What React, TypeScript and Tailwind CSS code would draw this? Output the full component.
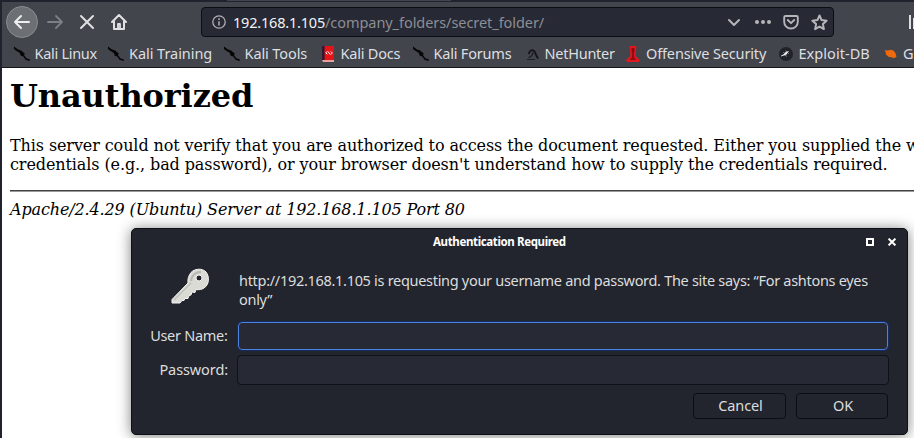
import React from "react";

const ui = "font-['Noto_Sans','Open_Sans',sans-serif]";

function Dragon() {
  return (
    <svg width="16" height="16" viewBox="0 0 16 16" fill="#050505">
      <path d="M0 .5 4 3.6 7.2 4.5 9.4 6.6 10.8 7.6 10 9l2.2 3.3L16 13.6l-.5 1.4-4-1.2-2.2-3.2-2.5-.9L5.8 7 2.3 4.7 0 3Z" />
    </svg>
  );
}

function DocsIcon() {
  return (
    <svg width="12" height="16" viewBox="0 0 12 16">
      <path d="M0 0h12v14H0z" fill="#e41318" />
      <path d="M0 0h2.6v14H0z" fill="#35182f" />
      <path d="M0 14h12v2H1z" fill="#e8a0a0" />
      <path d="M5.400 5.300 3.900 6.800l1.500 1.500M8.800 5.500l1.500 1.500-1.500 1.500M6 5.500l2.200 3" stroke="#fff" fill="none" />
    </svg>
  );
}

function NetHunterIcon() {
  return (
    <svg width="12" height="14" viewBox="0 0 12 14" fill="none" stroke="#14161a">
      <path d="M0 12.500h8" strokeWidth=".8" />
      <path d="M1.800 7C2.500 3.500 5 2.200 7 4c1.800 2 2 5 4.200 7.500" strokeWidth="1.9" />
      <path d="M1.500 10.500c3-.5 4-2.500 4.500-5" strokeWidth="1.2" />
    </svg>
  );
}

function OffensiveIcon() {
  return (
    <svg width="14" height="16" viewBox="0 0 14 16">
      <path d="M3.5 0h7l-1 10 4.5 4-1 2H1l-1-2 4.5-4Z" fill="#e0181d" />
      <path d="M5.5 2h3v4l-.7 1 .2 4 2 3H4l2-3 .2-4-.7-1Z" fill="#8f0a12" />
    </svg>
  );
}

function ExploitIcon() {
  return (
    <svg width="14" height="14" viewBox="0 0 14 14">
      <circle cx="7" cy="7" r="7" fill="#202329" />
      <path d="m2 8.800 3-1.800 2-2.200 3-.8-1.500 2-1.500 2-3 .8-2 .8Z" fill="#f4f4f4" />
      <path d="M4.500 5 7.500 9.500M6.500 3.800l3.500 3" stroke="#ccc" strokeWidth=".6" />
    </svg>
  );
}

function FlameIcon() {
  return (
    <svg width="13" height="10" viewBox="0 0 13 10">
      <path d="M2 3.500 .5 1.200l3.500.3 2.500-.8 3 .8 2 2.800 1 3.500-2 1.200L8 8.600 4.500 7.800 1.500 5Z" fill="#f06a0c" />
    </svg>
  );
}

const bookmarks = [
  { label: "Kali Linux", icon: <Dragon />, w: "w-[94px]", i: "w-[20.5px]", t: "tracking-[-0.29px]" },
  { label: "Kali Training", icon: <Dragon />, w: "w-[116px]", i: "w-[21px]", t: "tracking-[-0.05px]" },
  { label: "Kali Tools", icon: <Dragon />, w: "w-[98px]", i: "w-[20.5px]", t: "tracking-[-0.1px]" },
  { label: "Kali Docs", icon: <DocsIcon />, w: "w-[91px]", i: "w-[18.5px]", t: "tracking-[-0.2px]" },
  { label: "Kali Forums", icon: <Dragon />, w: "w-[114px]", i: "w-[20.5px]", t: "tracking-[-0.2px]" },
  { label: "NetHunter", icon: <NetHunterIcon />, w: "w-[99px]", i: "w-[17.5px]", t: "tracking-[-0.25px]" },
  { label: "Offensive Security", icon: <OffensiveIcon />, w: "w-[153px]", i: "w-[20px]", t: "tracking-[-0.15px]" },
  { label: "Exploit-DB", icon: <ExploitIcon />, w: "w-[105px]", i: "w-[19.5px]", t: "tracking-[0.05px]" },
  { label: "GHDB", icon: <FlameIcon />, w: "w-[80px]", i: "w-[19px]", t: "tracking-[-0.1px]" },
];

function Toolbar() {
  return (
    <div className="flex h-[36px] items-center pl-[4px]">
      <div className="grid size-[32px] shrink-0 place-items-center rounded-full border border-[#8a8c8f] bg-[#6c6f73]">
        <svg width="18" height="18" viewBox="0 0 18 18" fill="none" stroke="#eeeef0" strokeWidth="2" strokeLinecap="round" strokeLinejoin="round">
          <path d="M2 9h14M8 3 2 9l6 6" />
        </svg>
      </div>
      <svg className="ml-[8px] shrink-0" width="18" height="18" viewBox="0 0 18 18" fill="none" stroke="#7c7f84" strokeWidth="1.8" strokeLinecap="round" strokeLinejoin="round">
        <path d="M2 9h13.5M10 3l6 6-6 6" />
      </svg>
      <svg className="ml-[14px] shrink-0" width="18" height="18" viewBox="0 0 18 18" fill="none" stroke="#dfe0e2" strokeWidth="2" strokeLinecap="round">
        <path d="m3 3 12 12M15 3 3 15" />
      </svg>
      <svg className="ml-[14px] shrink-0" width="18" height="18" viewBox="0 0 18 18" fill="none" stroke="#dfe0e2" strokeWidth="2" strokeLinecap="round" strokeLinejoin="round">
        <path d="m2 9 7-7 7 7M4 8.5V16h10V8.5" />
        <path d="M8 15.5v-4.500h2v4.500" strokeWidth="1.800" />
      </svg>
      <div className="ml-[73px] flex h-[30px] w-[633px] shrink-0 items-center rounded-[4px] border border-[#0c0d12] bg-[#272934] pl-[10px]">
        <svg width="14" height="14" viewBox="0 0 14 14" fill="none" stroke="#b0b1b5" strokeWidth="1.3">
          <circle cx="7" cy="7" r="6.2" />
          <path d="M7 6.2v4.3M7 3.3v1.6" strokeWidth="1.5" />
        </svg>
        <div className={`${ui} ml-[7px] w-[494px] whitespace-nowrap text-[14.5px] leading-[20px] tracking-[-0.06px] text-[#8d8e94]`}>
          <span className="tracking-[-0.2px] text-[#f3f3f4]">192.168.1.105</span>/company_folders/secret_folder/
        </div>
        <svg width="14" height="14" viewBox="0 0 14 14" fill="none" stroke="#b5b6b9" strokeWidth="2" strokeLinecap="round" strokeLinejoin="round">
          <path d="m2 5 5 5 5-5" />
        </svg>
        <svg className="ml-[14px]" width="16" height="6" viewBox="0 0 16 6" fill="#b5b6b9">
          <circle cx="2" cy="3" r="2" /><circle cx="8" cy="3" r="2" /><circle cx="14" cy="3" r="2" />
        </svg>
        <svg className="ml-[12px]" width="16" height="16" viewBox="0 0 16 16" fill="none" stroke="#b5b6b9" strokeWidth="1.9" strokeLinecap="round" strokeLinejoin="round">
          <path d="M2.5 2h11q1.3 0 1.3 1.3V8a6.8 6.5 0 0 1-13.6 0V3.3Q1.200 2 2.500 2ZM4.800 6 8 9.200 11.200 6" />
        </svg>
        <svg className="ml-[12px]" width="17" height="17" viewBox="0 0 17 17" fill="none" stroke="#b5b6b9" strokeWidth="2" strokeLinejoin="round">
          <path d="m8.500 1.500 2.100 4.600 5 .6-3.700 3.400 1 5-4.400-2.500-4.400 2.500 1-5-3.700-3.400 5-.6Z" />
        </svg>
      </div>
      <svg className="ml-[75px] shrink-0" width="16" height="16" viewBox="0 0 16 16" fill="#dfe0e2">
        <path d="M0 1h2v14H0zM4 4h2v11H4zM8 1h2v14H8z" />
      </svg>
    </div>
  );
}

function Dialog() {
  return (
    <div className={`${ui} absolute left-[129px] top-[228px] h-[207px] w-[777px] rounded-[5px] border border-[#0d0f15] bg-[#23252e] text-[#dcdddd] shadow-[0_1px_14px_rgba(0,0,0,0.5)]`}>
      <div className="flex h-[26px] items-center">
        <span className="ml-[301px] w-[433px] whitespace-nowrap text-[11.5px] font-bold leading-[16px] tracking-[-0.37px] text-white">Authentication Required</span>
        <svg width="8" height="8" viewBox="0 0 8 8" fill="none" stroke="#fff" strokeWidth="2"><path d="M1 1h6v6H1z" /></svg>
        <svg className="ml-[14px]" width="8" height="8" viewBox="0 0 9 9" stroke="#fff" strokeWidth="2.200"><path d="m.7.700 7.600 7.600M8.300.700.700 8.300" /></svg>
      </div>
      <div className="flex h-[67px]">
        <svg className="ml-[39px] mt-[12px] shrink-0" width="39" height="39" viewBox="0 0 39 39">
          <path fillRule="evenodd" d="M20 5.500C23 2 31 .500 35 5c4 5 3 13-2 16-2 1.500-5 2-8 1.500l-1 3-3-.5-1 3-2 .5-1 3-3 0-1 2-2 0L9 36H1v-3.500L17 16c-.5-4 .5-7 3-10.500Zm8 2.500a3 3 0 1 0 3 3 3 3 0 0 0-3-3Z" fill="#dadbd5" stroke="#f5f5f1" strokeWidth="1" />
          <path d="M3 33 20 16" stroke="#bfc0ba" strokeWidth="1.500" />
          <path d="M20 14c1-6 5-9 10-9" stroke="#b6b7b1" fill="none" strokeWidth="2" />
        </svg>
        <p className="ml-[29px] mt-[16px] whitespace-nowrap text-[14.5px] leading-[19px] tracking-[-0.3px]">
          http://192.168.1.105 is requesting your username and password. The site says: “For ashtons eyes<br />only”
        </p>
      </div>
      <div className="flex h-[28px] items-center text-[14.5px] tracking-[-0.29px]">
        <label className="w-[95.5px] whitespace-nowrap text-right">User Name:</label>
        <div className="ml-[10.5px] h-[28px] w-[650px] rounded-[4px] border border-[#4b82e0] bg-[#272934] outline outline-[#142c62]" />
      </div>
      <div className="mt-[5px] flex h-[30px] items-center text-[14.5px] tracking-[-0.1px]">
        <label className="w-[96px] whitespace-nowrap text-right">Password:</label>
        <div className="ml-[9px] h-[30px] w-[652px] rounded-[4px] border border-[#0f1118] bg-[#272934]" />
      </div>
      <div className="mt-[8px] flex gap-[10px] pl-[561px] text-[14.5px] tracking-[-0.1px]">
        <button className="h-[26px] w-[93px] rounded-[4px] border border-[#0b0d13] pb-[2px] pl-[2px] leading-[22px]">Cancel</button>
        <button className="h-[26px] w-[92px] rounded-[4px] border border-[#0b0d13] pb-[2px] pl-[2px] leading-[22px]">OK</button>
      </div>
    </div>
  );
}

export default function App() {
  return (
    <div className="relative h-[438px] w-[914px] overflow-hidden border-l-2 border-[#20232d] bg-white">
      <header className="h-[68px] border-b border-[#15171b] bg-[#42454c]">
        <div className="flex h-[2px] bg-[#20232d]"><div className="ml-[225px] h-[1px] w-[224px] bg-[#42454c]" /></div>
        <div className="h-[2px]" />
        <Toolbar />
        <nav className={`${ui} flex h-[27px] items-center pl-[12px] text-[14.5px] leading-[20px] text-[#dedfe0]`}>
          {bookmarks.map((b) => (
            <div key={b.label} className={`flex shrink-0 items-center ${b.w}`}>
              <span className={`shrink-0 ${b.i}`}>{b.icon}</span>
              <span className={`whitespace-nowrap pb-[2px] leading-[18px] ${b.t}`}>{b.label}</span>
            </div>
          ))}
        </nav>
      </header>
      <main className="pl-[8px] font-['DejaVu_Serif',serif] text-[16px] leading-[19px] tracking-[-0.1px] text-black">
        <h1 className="pt-[9px] text-[32px] font-bold leading-[38px]">Unauthorized</h1>
        <p className="mt-[21px] whitespace-nowrap">
          This server could not verify that you are authorized to access the document requested. Either you supplied the wrong<br />
          credentials (e.g., bad password), or your browser doesn't understand how to supply the credentials required.
        </p>
        <hr className="mt-[16px] h-[2px] border-0 border-t border-[#444] bg-[#999]" />
        <address className="mt-[8px] italic tracking-[-0.13px]">Apache/2.4.29 (Ubuntu) Server at 192.168.1.105 Port 80</address>
      </main>
      <Dialog />
    </div>
  );
}
